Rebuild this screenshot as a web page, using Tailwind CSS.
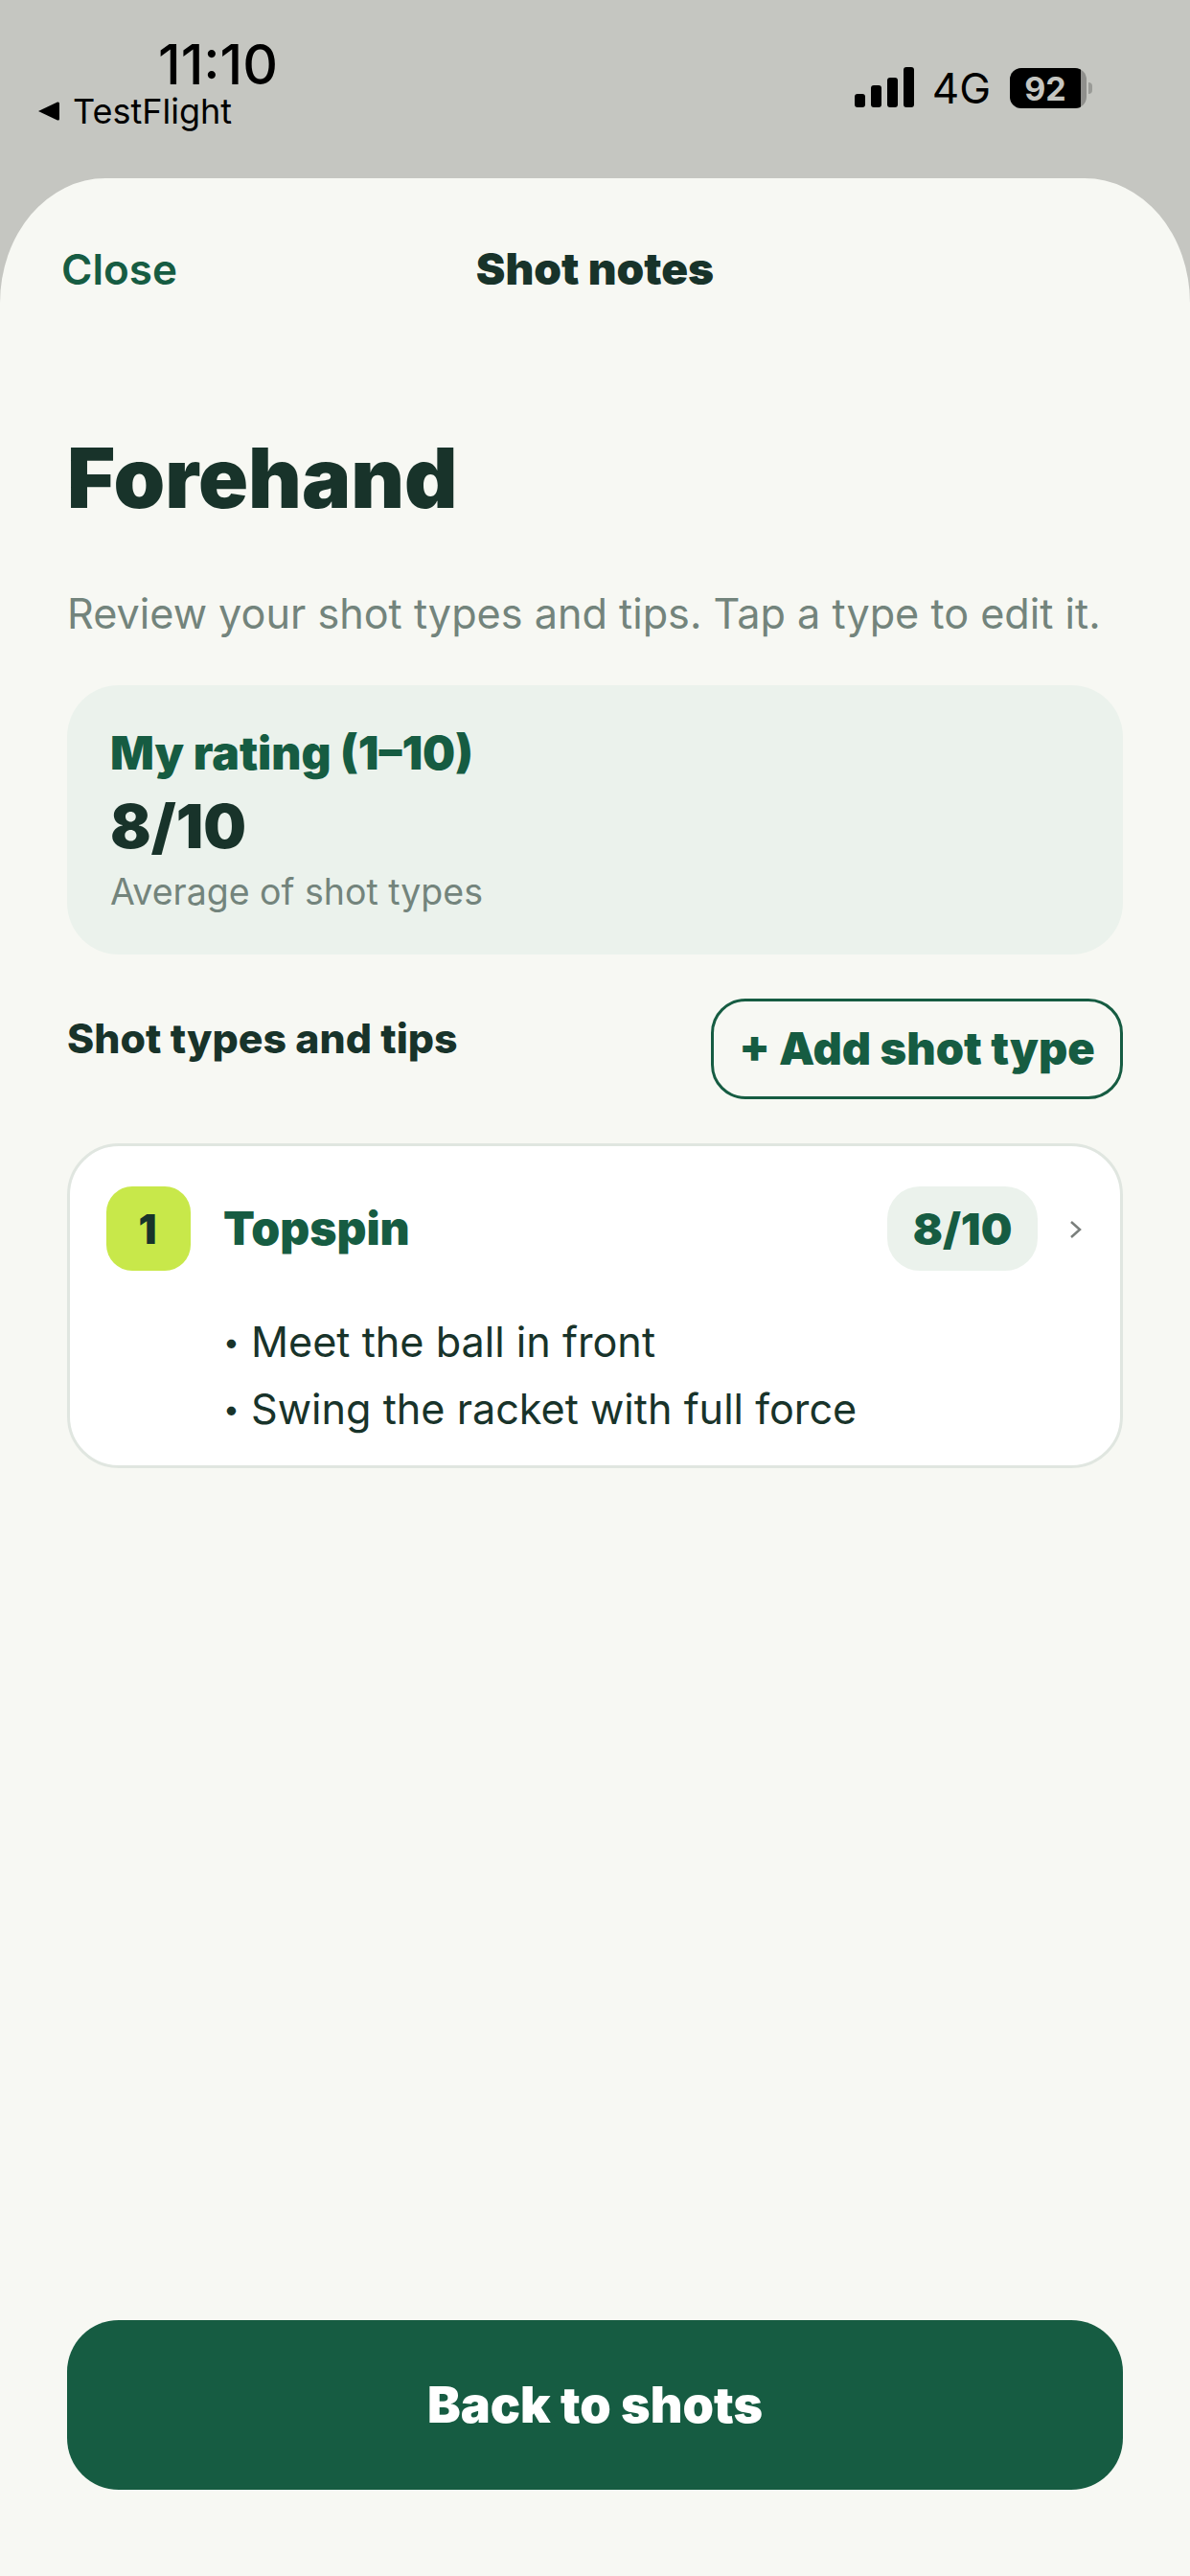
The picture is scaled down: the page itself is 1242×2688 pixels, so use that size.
<!DOCTYPE html>
<html><head><meta charset="utf-8"><script src="https://cdn.jsdelivr.net/npm/@tailwindcss/browser@4"></script></head>
<body class="m-0">
<div class="w-[1242px] h-[2688px] bg-[#c5c6c1] flex flex-col overflow-hidden font-['Inter',sans-serif]">
  <div class="h-[186px] flex justify-between shrink-0">
    <div class="pl-[39px] pt-[38px] flex flex-col">
      <div class="pl-[126px] text-[57px] leading-[60px] font-medium text-black">11:10</div>
      <div class="flex items-center gap-[13px] mt-[-2px] text-[36px] leading-[40px] text-black">
        <svg width="24" height="24" viewBox="0 0 24 24"><path d="M1 12 L21 2.5 Q23 2 23 4 V20 Q23 22 21 21.5 Z" fill="#000"/></svg>
        <span>TestFlight</span>
      </div>
    </div>
    <div class="flex items-start pt-[71px] pr-[102px]">
      <svg width="62" height="42" viewBox="0 0 62 42" class="mt-[-1px] mr-[19px]" fill="#000"><rect x="0" y="28" width="11" height="14" rx="3"/><rect x="17" y="19" width="11" height="23" rx="3"/><rect x="34" y="11" width="11" height="31" rx="3"/><rect x="51" y="0" width="11" height="42" rx="3"/></svg>
      <span class="text-[44px] leading-[42px] text-black mr-[20px]">4G</span>
      <div class="flex items-center">
        <div class="w-[80px] h-[42px] rounded-[12px] bg-[#8f8f8c] overflow-hidden flex">
          <div class="w-[74px] h-full bg-black flex items-center justify-center text-[34px] font-bold text-[#c5c6c1]">92</div>
        </div>
        <div class="w-[4px] h-[12px] ml-[2px] rounded-r-full bg-[#9a9b97]"></div>
      </div>
    </div>
  </div>
  <div class="flex-1 bg-[#f7f8f3] rounded-tl-[110px_130px] rounded-tr-[110px_130px] flex flex-col px-[70px] pb-[90px]">
    <div class="relative h-[0px]">
      <div class="absolute left-[-6px] top-[68px] text-[44px] leading-[54px] font-semibold text-[#165c42]">Close</div>
    </div>
    <div class="text-center pt-[67px] text-[46px] leading-[54px] font-black text-[#18332a]">Shot notes</div>
    <h1 class="mt-[147px] text-[86px] leading-[90px] font-black text-[#18332a]">Forehand</h1>
    <p class="mt-[70px] text-[43.2px] leading-[52px] text-[#73847c] whitespace-nowrap">Review your shot types and tips. Tap a type to edit it.</p>
    <div class="mt-[49px] h-[281px] rounded-[54px] bg-[#ebf2ec] px-[45px] pt-[44px] flex flex-col">
      <div class="text-[48px] leading-[54px] font-black text-[#165c42]">My rating (1–10)</div>
      <div class="mt-[13px] text-[63px] leading-[72px] font-black text-[#18332a]">8/10</div>
      <div class="mt-[10px] text-[37.5px] leading-[46px] text-[#73847c]">Average of shot types</div>
    </div>
    <div class="mt-[46px] flex justify-between items-start">
      <div class="pt-[15px] text-[42.8px] leading-[54px] font-extrabold text-[#18332a]">Shot types and tips</div>
      <div class="w-[430px] h-[105px] rounded-[36px] border-[3px] border-[#165c42] flex items-center justify-center text-[47px] font-black text-[#165c42]">+ Add shot type</div>
    </div>
    <div class="mt-[46px] h-[339px] rounded-[54px] border-[3px] border-[#e0e6e0] bg-white px-[38px] pt-[42px]">
      <div class="flex items-center">
        <div class="w-[88px] h-[88px] rounded-[27px] bg-[#c8e84a] flex items-center justify-center pr-[2px] text-[42px] font-black text-[#18332a]">1</div>
        <div class="ml-[34px] flex-1 text-[48px] font-black text-[#165c42]">Topspin</div>
        <div class="w-[157px] h-[88px] rounded-[34px] bg-[#ebf2ec] flex items-center justify-center text-[46px] font-black text-[#165c42]">8/10</div>
        <svg width="14" height="24" viewBox="0 0 14 24" class="ml-[33px] mr-[1px] mt-[2px]" fill="none" stroke="#7a7f7c" stroke-width="2.5"><path d="M2 4 L11 12 L2 20"/></svg>
      </div>
      <div class="mt-[46px] ml-[122px] flex flex-col gap-[14px] text-[43.2px] leading-[56px] text-[#18332a]">
        <div class="flex"><span class="w-[29px] text-[30px]">•</span><span>Meet the ball in front</span></div>
        <div class="flex"><span class="w-[29px] text-[30px]">•</span><span>Swing the racket with full force</span></div>
      </div>
    </div>
    <div class="mt-auto h-[177px] rounded-[54px] bg-[#165c42] flex items-center justify-center text-[52px] font-black text-white">Back to shots</div>
  </div>
</div>
</body></html>
